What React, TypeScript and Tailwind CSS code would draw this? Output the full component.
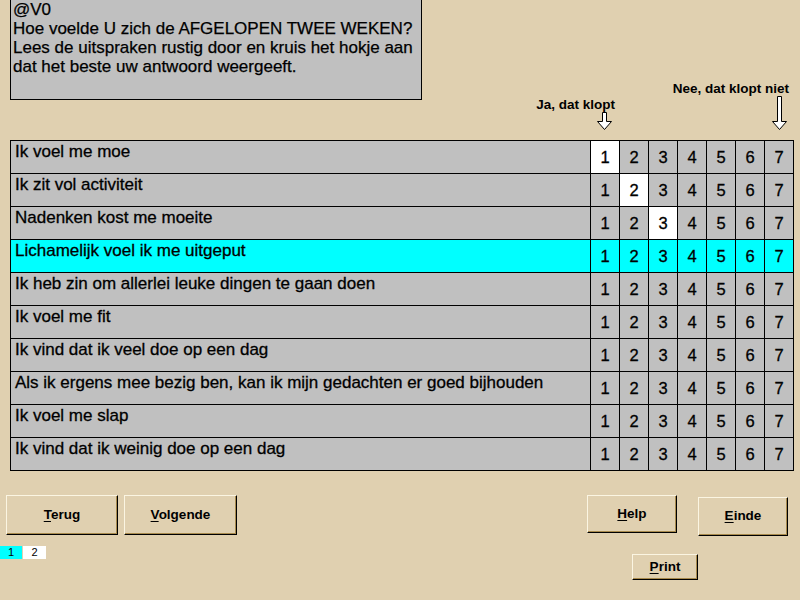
import React from 'react';

const items = [
  'Ik voel me moe',
  'Ik zit vol activiteit',
  'Nadenken kost me moeite',
  'Lichamelijk voel ik me uitgeput',
  'Ik heb zin om allerlei leuke dingen te gaan doen',
  'Ik voel me fit',
  'Ik vind dat ik veel doe op een dag',
  'Als ik ergens mee bezig ben, kan ik mijn gedachten er goed bijhouden',
  'Ik voel me slap',
  'Ik vind dat ik weinig doe op een dag',
];

// answers given so far (row index -> chosen value)
const answers: Record<number, number> = { 0: 1, 1: 2, 2: 3 };
const current = 3;

const Btn = ({ label, className }: { label: string; className: string }) => (
  <button
    className={`flex items-center justify-center bg-[#e0d0b0] border-t border-l border-t-[#fbf5e2] border-l-[#fbf5e2] border-b border-r border-b-black border-r-black shadow-[inset_-1px_-1px_0_#a88a4c] text-[13.5px] font-bold text-black ${className}`}
  >
    <span>
      <span className="underline underline-offset-2">{label[0]}</span>
      {label.slice(1)}
    </span>
  </button>
);

const App: React.FC = () => {
  return (
    <div className="w-[800px] h-[600px] overflow-hidden bg-[#e0d0b0] font-['Liberation_Sans',Arial,sans-serif] text-black">
      {/* header: question box + scale labels */}
      <div className="flex h-[140px]">
        <div className="ml-[10px] w-[412px] h-[100px] bg-[#c0c0c0] border border-t-0 border-black pl-[2px] text-[17px] leading-[19px] [-webkit-text-stroke:0.25px_black]">
          <div>@V0</div>
          <div>Hoe voelde U zich de AFGELOPEN TWEE WEKEN?</div>
          <div>Lees de uitspraken rustig door en kruis het hokje aan</div>
          <div>dat het beste uw antwoord weergeeft.</div>
        </div>
        <div className="w-[193px] flex flex-col items-end justify-end pb-[9px]">
          <span className="text-[13.5px] font-bold leading-[15px]">Ja, dat klopt</span>
          <svg width="16" height="19" viewBox="0 0 16 19" className="mr-[2px]">
            <polygon points="5.5,0.5 9.5,0.5 9.5,9.5 14.5,9.5 7.5,17.5 0.5,9.5 5.5,9.5" fill="white" stroke="black" />
          </svg>
        </div>
        <div className="w-[174px] flex flex-col items-end justify-end pb-[9px]">
          <span className="text-[13.5px] font-bold leading-[15px]">Nee, dat klopt niet</span>
          <svg width="17" height="35" viewBox="0 0 17 35" className="mr-[1px]">
            <polygon points="6.5,0.5 10.5,0.5 10.5,25.5 15.5,25.5 8.5,33.5 1.5,25.5 6.5,25.5" fill="white" stroke="black" />
          </svg>
        </div>
      </div>

      {/* questionnaire table */}
      <div className="ml-[10px] w-[784px] border-l border-t border-black [-webkit-text-stroke:0.3px_black]">
        {items.map((text, i) => (
          <div key={i} className={`grid grid-cols-[580px_repeat(7,29px)] h-[33px] ${i === current ? 'bg-[#00ffff]' : 'bg-[#c0c0c0]'}`}>
            <div className="border-r border-b border-black pl-[4px] pt-[1px] text-[17px] leading-[19px] whitespace-nowrap">{text}</div>
            {[1, 2, 3, 4, 5, 6, 7].map((n) => (
              <div
                key={n}
                className={`border-r border-b border-black flex items-center justify-center text-[16.5px] ${answers[i] === n ? 'bg-white' : ''}`}
              >
                {n}
              </div>
            ))}
          </div>
        ))}
      </div>

      {/* navigation */}
      <div className="flex mt-[24px]">
        <div className="w-[587px] flex flex-col">
          <div className="flex gap-[6px] pl-[6px]">
            <Btn label="Terug" className="w-[112px] h-[40px]" />
            <Btn label="Volgende" className="w-[113px] h-[40px]" />
          </div>
          <div className="flex gap-[1px] mt-[11px] text-[11px] leading-[13px]">
            <div className="w-[22px] h-[13px] bg-[#00ffff] text-center">1</div>
            <div className="w-[23px] h-[13px] bg-white text-center">2</div>
          </div>
        </div>
        <div className="flex flex-col">
          <div className="flex items-start">
            <Btn label="Help" className="w-[90px] h-[38px]" />
            <Btn label="Einde" className="ml-[21px] mt-[2px] w-[90px] h-[39px]" />
          </div>
          <Btn label="Print" className="ml-[45px] mt-[18px] w-[66px] h-[26px]" />
        </div>
      </div>
    </div>
  );
};

export default App;
